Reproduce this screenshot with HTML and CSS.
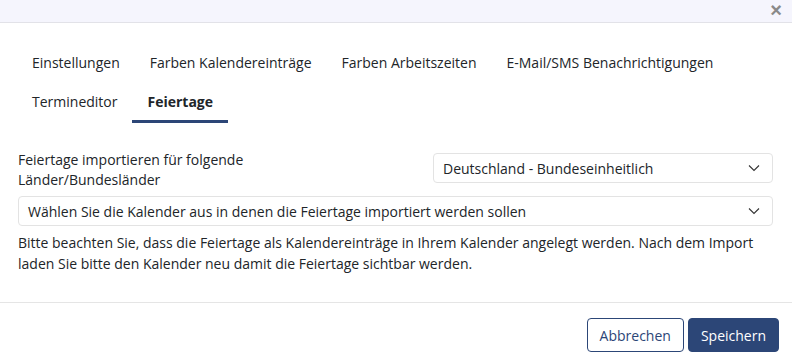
FILE: index.html
```html
<!DOCTYPE html>
<html lang="de">

<head>
    <meta charset="UTF-8">
    <meta name="viewport" content="width=device-width, initial-scale=1.0">
    <title>Einstellungen</title>
    <link rel="stylesheet" href="styles.css">
</head>

<body>
    <div class="modal-header">
        <button class="close" type="button">&times;</button>
    </div>

    <div class="modal-body">
        <ul class="tabs">
            <li class="tab">Einstellungen</li>
            <li class="tab">Farben Kalendereinträge</li>
            <li class="tab">Farben Arbeitszeiten</li>
            <li class="tab">E-Mail/SMS Benachrichtigungen</li>
            <li class="tab">Termineditor</li>
            <li class="tab active">Feiertage</li>
        </ul>

        <div class="form-row">
            <label class="form-label">Feiertage importieren für folgende Länder/Bundesländer</label>
            <div class="select select-half">
                <span>Deutschland - Bundeseinheitlich</span>
                <svg class="chevron" width="12" height="8" viewBox="0 0 12 8"><path d="M1 1.5l5 5 5-5" fill="none" stroke="#333" stroke-width="1.1"/></svg>
            </div>
        </div>

        <div class="select">
            <span>Wählen Sie die Kalender aus in denen die Feiertage importiert werden sollen</span>
            <svg class="chevron" width="12" height="8" viewBox="0 0 12 8"><path d="M1 1.5l5 5 5-5" fill="none" stroke="#333" stroke-width="1.1"/></svg>
        </div>

        <p class="hint">Bitte beachten Sie, dass die Feiertage als Kalendereinträge in Ihrem Kalender angelegt werden. Nach dem Import laden Sie bitte den Kalender neu damit die Feiertage sichtbar werden.</p>
    </div>

    <div class="modal-footer">
        <button class="btn btn-outline" type="button">Abbrechen</button>
        <button class="btn btn-primary" type="button">Speichern</button>
    </div>
</body>

</html>
```

FILE: styles.css
```css
body {
    margin: 0;
    font-family: "Open Sans", Arial, sans-serif;
    font-size: 14px;
    color: #212529;
    background: #fff;
}

.modal-header {
    height: 22px;
    background: #f5f5fd;
    border-bottom: 1px solid #e2e2e8;
    display: flex;
    justify-content: flex-end;
    align-items: center;
}

.close {
    border: none;
    background: none;
    color: #8a8a8a;
    font-size: 20px;
    font-weight: bold;
    line-height: 1;
    padding: 0 10px 2px;
    font-family: Arial, sans-serif;
}

.modal-body {
    padding: 22px 19px 28px 17px;
}

.tabs {
    list-style: none;
    margin: 0 0 30px 0;
    padding: 0;
    display: flex;
    flex-wrap: wrap;
}

.tab {
    padding: 8px 15px;
    border-bottom: 3px solid transparent;
    line-height: 20px;
}

.tab.active {
    font-weight: bold;
    border-bottom-color: #2c4677;
}

.form-row {
    display: flex;
    align-items: flex-start;
    justify-content: space-between;
    height: 30px;
    margin-bottom: 13px;
}

.form-label {
    width: 260px;
    line-height: 20px;
    padding-left: 1px;
    margin-top: -3px;
}

.select {
    display: flex;
    align-items: center;
    justify-content: space-between;
    height: 30px;
    box-sizing: border-box;
    border: 1px solid #e3e3e3;
    border-radius: 4px;
    padding: 0 12px 0 9px;
    margin-left: 1px;
}

.select-half {
    width: 340px;
}

.chevron {
    flex: none;
}

.hint {
    margin: 6px 0 0 1px;
    line-height: 21px;
}

.modal-footer {
    border-top: 1px solid #e5e5e5;
    display: flex;
    justify-content: flex-end;
    gap: 4px;
    padding: 15px 13px 0 0;
}

.btn {
    font-family: inherit;
    font-size: 14px;
    height: 34px;
    padding: 0 12px;
    border-radius: 4px;
    cursor: pointer;
}

.btn-outline {
    background: #fff;
    color: #2c4677;
    border: 1px solid #2c4677;
}

.btn-primary {
    background: #2c4677;
    color: #fff;
    border: 1px solid #2c4677;
}
```
